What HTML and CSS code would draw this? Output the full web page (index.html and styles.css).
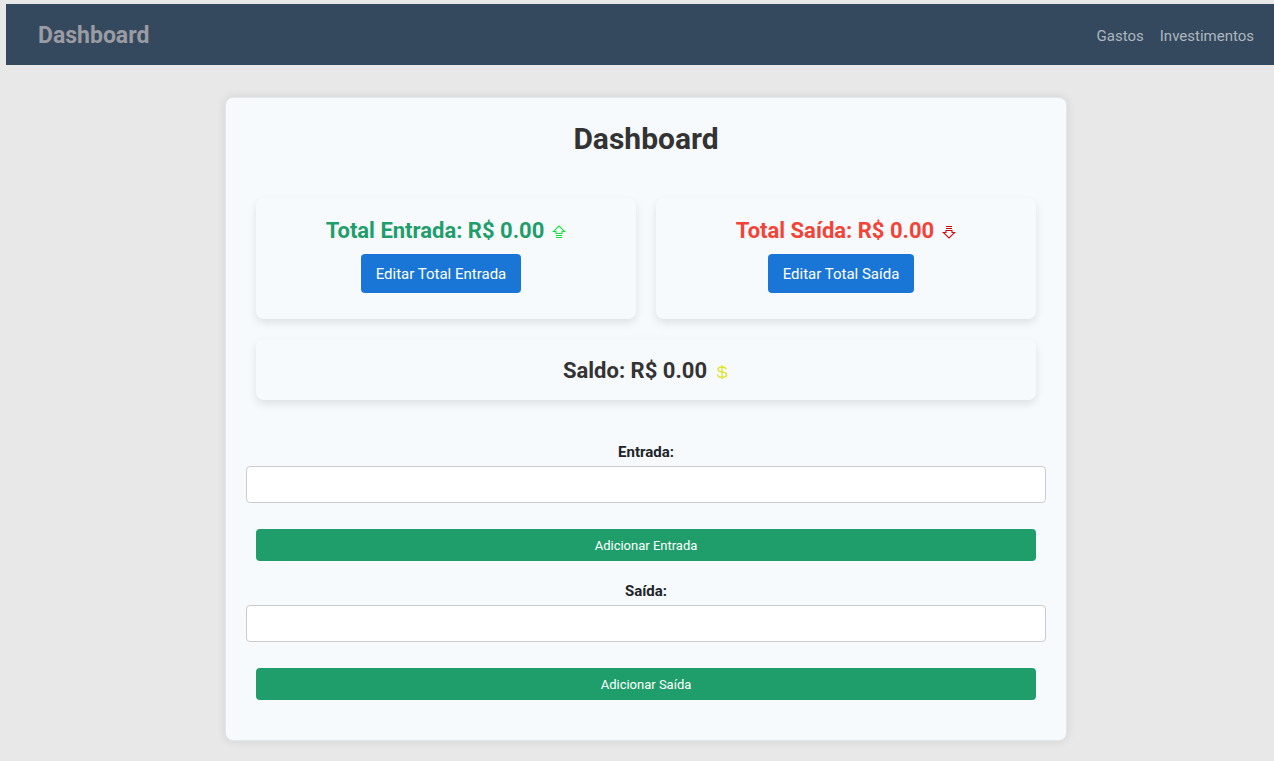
FILE: index.html
```html
<!DOCTYPE html>
<html lang="pt-BR">
<head>
<meta charset="utf-8">
<title>Dashboard</title>
<link rel="stylesheet" href="styles.css">
</head>
<body>
<nav class="navbar">
  <a class="brand" href="#">Dashboard</a>
  <div class="nav-links">
    <a href="#">Gastos</a>
    <a href="#">Investimentos</a>
  </div>
</nav>
<main class="page">
  <section class="panel">
    <h1 class="title">Dashboard</h1>
    <div class="summary">
      <article class="card">
        <h2 class="total income">Total Entrada: R$ 0.00
          <svg class="icon" viewBox="0 0 14 14" fill="none" stroke="#14e33c" stroke-width="1.100" aria-hidden="true"><path d="M4 8.500v-2H1.200L7 1l5.800 5.500H10v2zM4 10.500h6M4 12.500h6"/></svg>
        </h2>
        <button class="edit" type="button">Editar Total Entrada</button>
      </article>
      <article class="card">
        <h2 class="total expense">Total Saída: R$ 0.00
          <svg class="icon" viewBox="0 0 14 14" fill="none" stroke="#d00a0a" stroke-width="1.100" aria-hidden="true"><path d="M4 1.500h6M4 3.500h6M4 5.500h6v2h2.800L7 13 1.200 7.500H4z"/></svg>
        </h2>
        <button class="edit" type="button">Editar Total Saída</button>
      </article>
      <article class="card balance">
        <h2 class="total">Saldo: R$ 0.00
          <svg class="icon" viewBox="0 0 14 14" fill="none" stroke="#dfe329" stroke-width="1.300" aria-hidden="true"><path d="M7 0v14M11 4.500C11 2.800 9.500 2 7 2S3 2.800 3 4.500 4.500 6.700 7 7s4.500 1 4.500 2.700S9.800 12.300 7 12.300 2.500 11.500 2.500 9.500"/></svg>
        </h2>
      </article>
    </div>
    <form class="entry">
      <label for="entrada">Entrada:</label>
      <input id="entrada" type="text">
      <button class="add" type="button">Adicionar Entrada</button>
    </form>
    <form class="entry">
      <label for="saida">Saída:</label>
      <input id="saida" type="text">
      <button class="add" type="button">Adicionar Saída</button>
    </form>
  </section>
</main>
</body>
</html>
```
FILE: styles.css
```css
* { box-sizing: border-box; }

body {
  margin: 0;
  padding: 4px 0 0 6px;
  background: #e8e8e8;
  color: #212529;
  font-family: Roboto, "Noto Sans", sans-serif;
}

.navbar {
  display: flex;
  align-items: center;
  justify-content: space-between;
  padding: 17px 20px 14px 32px;
  background: #34495e;
}
.navbar a { text-decoration: none; }
.brand {
  color: #9b9ba3;
  font-size: 23px;
  line-height: 30px;
  font-weight: 700;
}
.nav-links { display: flex; gap: 16px; }
.nav-links a { color: #aeb6bf; font-size: 15px; }

.page { padding: 32px 20px 20px 32px; }

.panel {
  max-width: 842px;
  margin: 0 auto;
  padding: 20px 20px 40px;
  background: #f6fafd;
  border: 1px solid #e4e7ea;
  border-radius: 8px;
  box-shadow: 0 0 10px rgba(0, 0, 0, 0.1);
}
.title {
  margin: 0;
  color: #333;
  font-size: 30px;
  line-height: 42px;
  font-weight: 700;
  text-align: center;
}

.summary {
  display: grid;
  grid-template-columns: 1fr 1fr;
  gap: 20px;
  padding: 38px 10px 40px;
}
.card {
  padding: 21px 20px 26px;
  border-radius: 8px;
  box-shadow: 0 4px 8px rgba(0, 0, 0, 0.1);
  text-align: center;
}
.balance { grid-column: 1 / -1; padding: 20px 20px 17px; }
.total {
  display: flex;
  align-items: center;
  justify-content: center;
  gap: 8px;
  margin: 0;
  color: #333;
  font-size: 22px;
  line-height: 24px;
  font-weight: 700;
}
.income { color: #1f9e6b; }
.expense { color: #f44336; }
.icon { width: 14px; height: 14px; margin-top: 2px; }

button {
  border: 0;
  border-radius: 4px;
  color: #fff;
  font-family: inherit;
}
.edit {
  margin: 11px 10px 0 0;
  padding: 11px 15px 9px;
  background: #1976d6;
  font-size: 15px;
  line-height: 19px;
}

.entry { display: flex; flex-direction: column; }
.entry + .entry { margin-top: 18px; }
.entry label {
  padding-top: 2px;
  font-size: 15px;
  line-height: 20px;
  font-weight: 700;
  text-align: center;
}
.entry input {
  height: 37px;
  margin-top: 4px;
  padding: 8px;
  border: 1px solid #ccc;
  border-radius: 4px;
  background: #fff;
  font: inherit;
}
.add {
  margin: 26px 10px 0;
  padding: 8px 7px 6px;
  background: #1f9e6b;
  font-size: 13px;
  line-height: 18px;
}
```
